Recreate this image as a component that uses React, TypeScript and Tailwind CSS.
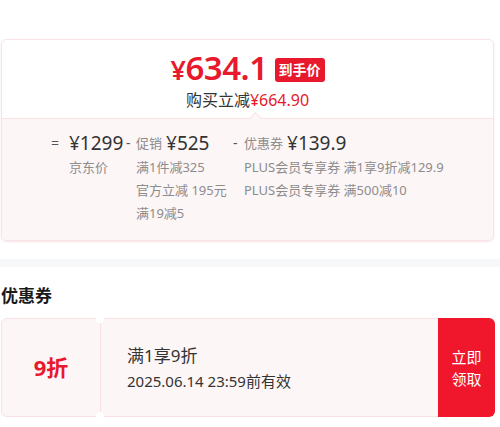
import React from "react";

const font = { fontFamily: '"Noto Sans", "Noto Sans CJK SC", sans-serif' };

export default function App() {
  return (
    <div className="h-[427px] w-[500px] overflow-hidden bg-white" style={font}>
      <div className="ml-[1px] w-[493px] pt-[39px]">
        {/* price card */}
        <div className="overflow-hidden rounded-md border border-[#f9e1e4] shadow-[0_1px_2px_rgba(230,180,190,0.35)]">
          <div className="relative flex h-[78px] flex-col items-center bg-white pt-[8px]">
            <div className="flex items-center gap-[7px]">
              <span className="text-[33px] font-semibold leading-[40px] tracking-[-0.5px] text-[#e8192c]">
                <span className="text-[27px]">¥</span>634.1
              </span>
              <span className="mt-[2px] rounded-[3px] bg-[#e8192c] px-[4px] text-[14px] font-bold leading-[24px] text-white">
                到手价
              </span>
            </div>
            <div className="text-[16px] leading-[21px] text-[#333]">
              购买立减<span className="text-[#e8192c]">¥664.90</span>
            </div>
            <div className="absolute bottom-[-5px] left-[249px] h-[9px] w-[9px] rotate-45 border-l border-t border-[#f9e1e4] bg-[#fdf6f7]" />
          </div>
          <div className="flex h-[122px] border-t border-[#f9e1e4] bg-[#fdf6f7] pl-[49px] pt-[11px] text-[13px] leading-[23px] text-[#8c8c8c]">
            <div className="flex w-[75px] flex-col">
              <div className="flex items-center leading-[26px]">
                <span className="w-[18px] text-[14px] text-[#555]">=</span>
                <span className="text-[19px] text-[#333]">¥1299</span>
              </div>
              <div className="pl-[18px]">京东价</div>
            </div>
            <div className="flex w-[107px] flex-col">
              <div className="flex items-center leading-[26px]">
                <span className="w-[10px] text-[14px] text-[#555]">-</span>
                <span className="mr-[4px]">促销</span>
                <span className="text-[19px] text-[#333]">¥525</span>
              </div>
              <div className="pl-[10px]">满1件减325</div>
              <div className="pl-[10px]">官方立减 195元</div>
              <div className="pl-[10px]">满19减5</div>
            </div>
            <div className="flex flex-col">
              <div className="flex items-center leading-[26px]">
                <span className="w-[11px] text-[14px] text-[#555]">-</span>
                <span className="mr-[4px]">优惠券</span>
                <span className="text-[19px] text-[#333]">¥139.9</span>
              </div>
              <div className="pl-[11px]">PLUS会员专享券 满1享9折减129.9</div>
              <div className="pl-[11px]">PLUS会员专享券 满500减10</div>
            </div>
          </div>
        </div>
      </div>

      {/* divider band */}
      <div className="mt-[18px] h-[8px] w-full bg-[#f7f8fa]" />

      <div className="ml-[1px] w-[494px]">
        <div className="pt-[17px] text-[17px] font-bold leading-[24px] text-[#1a1a1a]">优惠券</div>

        {/* coupon */}
        <div className="mt-[10px] flex h-[99px]">
          <div className="relative flex w-[100px] items-center justify-center rounded-l-md border border-[#f9e1e4] bg-[#fdf6f7]">
            <span className="text-[22px] font-bold text-[#e8192c]">9折</span>
          </div>
          <div className="relative flex flex-1 flex-col justify-center border-y border-r-0 border-[#f9e1e4] bg-[#fdf6f7] pl-[26px]">
            <div className="absolute left-[-5px] top-[-4px] h-[8px] w-[8px] rounded-full bg-white" />
            <div className="absolute bottom-[-4px] left-[-5px] h-[8px] w-[8px] rounded-full bg-white" />
            <div className="text-[17px] leading-[26px] text-[#333]">满1享9折</div>
            <div className="text-[15px] leading-[24px] text-[#333]">2025.06.14 23:59前有效</div>
          </div>
          <div className="flex w-[57px] flex-col items-center justify-center rounded-r-md bg-[#f0162b] text-[15px] leading-[22px] text-white">
            <span>立即</span>
            <span>领取</span>
          </div>
        </div>
      </div>
    </div>
  );
}
